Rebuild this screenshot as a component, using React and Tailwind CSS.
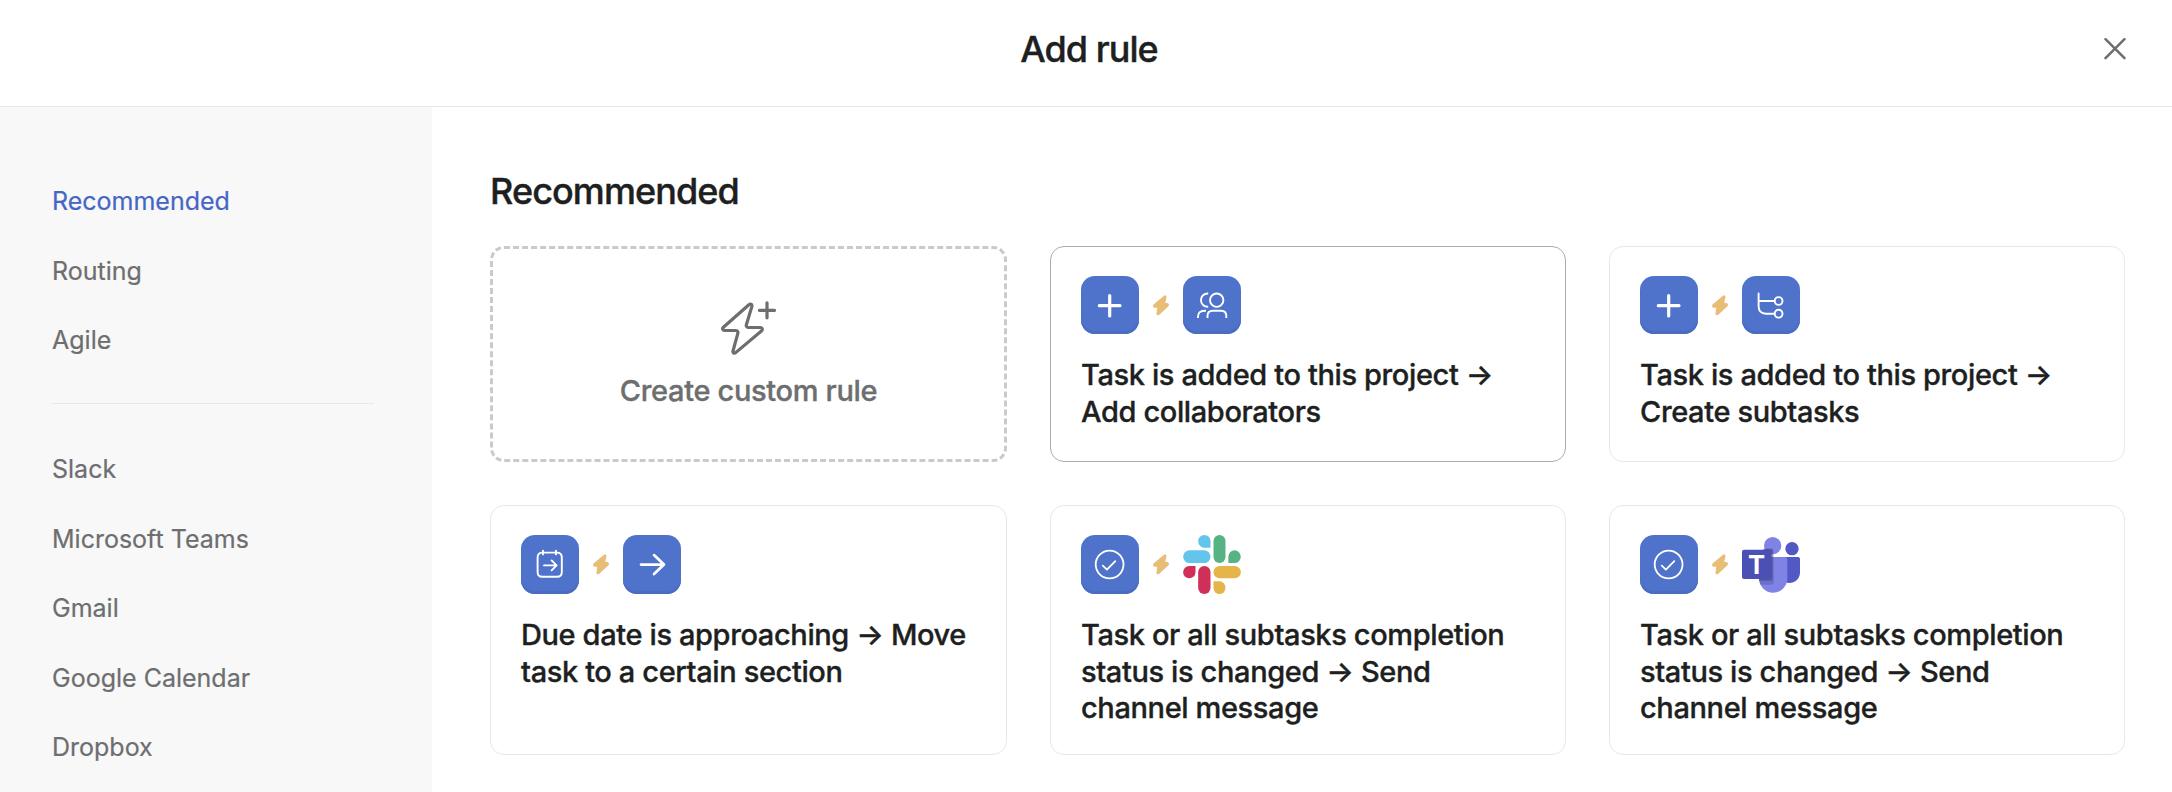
const stroke = { fill: "none", stroke: "currentColor", strokeLinecap: "round", strokeLinejoin: "round" };

function PlusGlyph() {
  return <path {...stroke} strokeWidth="3.2" d="M28.7 19.5V40M18.3 29.7H39" />;
}

function PeopleGlyph() {
  return (
    <g {...stroke} strokeWidth="1.9" strokeLinecap="butt">
      <circle cx="33.7" cy="24.2" r="6.7" />
      <path d="M25.2 17.5C21 17.3 18 20.3 18 24.2S21 31 25.2 30.8" />
      <path d="M24.5 42V40C24.5 36.8 26.7 34.8 29.8 34.8H38C41.1 34.8 43.3 36.8 43.3 40V42" />
      <path d="M15 42V40.4C15 36.6 17.6 34.6 23 34.8" />
    </g>
  );
}

function SubtaskGlyph() {
  return (
    <g {...stroke} strokeWidth="1.9">
      <path d="M16.6 17.4V30C16.6 35 19.2 37.7 24 37.7H32.4M16.6 25H32.4" />
      <circle cx="36.6" cy="25" r="3.9" />
      <circle cx="36.6" cy="37.7" r="3.9" />
    </g>
  );
}

function CalendarGlyph() {
  return (
    <g {...stroke} strokeWidth="1.9">
      <path d="M21.4 17.6H36C39 17.6 40.8 19.4 40.8 22.4V37C40.8 40 39 41.8 36 41.8H21.4C18.4 41.8 16.6 40 16.6 37V22.4C16.6 19.4 18.4 17.6 21.4 17.6Z" />
      <path d="M22 15.6V19.4M35 15.6V19.4" />
      <path d="M23 30.4H35.4M30.6 25.4L35.6 30.4L30.6 35.4" />
    </g>
  );
}

function ArrowGlyph() {
  return <path {...stroke} strokeWidth="2.7" d="M18 29.6H41M31 20.1L41 29.6L31 39.1" />;
}

function CheckGlyph() {
  return (
    <g {...stroke} strokeWidth="1.8">
      <circle cx="28.6" cy="29.5" r="13.9" />
      <path d="M21.8 30.7L25.9 34.6L34.3 26.1" />
    </g>
  );
}

function Tile({ children }) {
  return (
    <div className="h-full w-[58px] rounded-[14px] bg-[#4f73cb] text-white shadow-[inset_0_-3px_1px_#4a6cc1]">
      <svg viewBox="0 0 58 58" className="block size-[58px]">{children}</svg>
    </div>
  );
}

function SlackLogo() {
  return (
    <svg viewBox="0 0 173 177" className="block h-[59px] w-[58px]">
      <g fill="#63c4ec">
        <rect x="0" y="46" width="82" height="38" rx="19" />
        <path d="M63.5 0A18.5 18.5 0 0 1 82 19V38H63.5A18.5 19 0 0 1 63.5 0Z" />
      </g>
      <g fill="#58b384">
        <rect x="91" y="0" width="36" height="84" rx="18" />
        <path d="M135.5 84V65A18.7 19 0 1 1 154.3 84Z" />
      </g>
      <g fill="#cf3059">
        <rect x="45" y="93" width="37" height="84" rx="18.5" />
        <path d="M37 93V111.5A18.5 18.5 0 1 1 18.5 93Z" />
      </g>
      <g fill="#e5b54a">
        <rect x="91" y="93" width="82" height="37" rx="18.5" />
        <path d="M91 139H109A18 19 0 1 1 91 158Z" />
      </g>
    </svg>
  );
}

function TeamsLogo() {
  return (
    <svg viewBox="0 0 174 177" className="block h-[59px] w-[58px]">
      <circle cx="150" cy="41" r="20" fill="#5258c4" />
      <path d="M128 66H168Q174 66 174 72V113A31 31 0 0 1 128 140Z" fill="#5258c4" />
      <circle cx="92" cy="32" r="26" fill="#7f83e6" />
      <path d="M51 66H128Q136 66 136 74V130A42.5 43 0 0 1 51 130Z" fill="#7f83e6" />
      <path d="M66 41H88Q95 41 95 48V141Q95 149 87 149H56Q51 141 51 130V60Z" fill="#3f4279" opacity="0.3" />
      <path d="M66 41H86Q92 41 92 47V131Q92 137 86 137H51V60Z" fill="#3f4279" opacity="0.5" />
      <rect x="0" y="44" width="88" height="88" rx="6" fill="#4b50b5" />
      <text x="43.5" y="117" textAnchor="middle" fontFamily="Inter, sans-serif" fontWeight="700" fontSize="77" fill="#fff">T</text>
    </svg>
  );
}

function Bolt() {
  return (
    <svg viewBox="0 0 16 21" className="block h-[21px] w-4 text-[#e8bd76]">
      <path d="M11.6 1.4L1.2 10.3Q.9 11.5 1.8 11.8H5.4L4.4 18.8Q4.8 19.7 5.6 19L14.8 10.4Q15.2 9.4 14.3 9.0H11L12.5 2.2Q12.5 1.2 11.6 1.4Z" fill="currentColor" stroke="currentColor" strokeWidth="2" strokeLinejoin="round" />
    </svg>
  );
}

const rules = [
  { text: "Task is added to this project → Add collaborators", from: <Tile><PlusGlyph /></Tile>, to: <Tile><PeopleGlyph /></Tile>, active: true },
  { text: "Task is added to this project → Create subtasks", from: <Tile><PlusGlyph /></Tile>, to: <Tile><SubtaskGlyph /></Tile> },
  { text: "Due date is approaching → Move task to a certain section", from: <Tile><CalendarGlyph /></Tile>, to: <Tile><ArrowGlyph /></Tile>, tall: true },
  { text: "Task or all subtasks completion status is changed → Send channel message", from: <Tile><CheckGlyph /></Tile>, to: <SlackLogo />, tall: true },
  { text: "Task or all subtasks completion status is changed → Send channel message", from: <Tile><CheckGlyph /></Tile>, to: <TeamsLogo />, tall: true },
];

function RuleCard({ rule }) {
  return (
    <button className={`flex flex-col items-start rounded-[14px] border bg-white pt-[29px] pr-[29px] pl-[30px] text-left ${rule.active ? "border-[#acabab]" : "border-[#e9e8e8]"}`}>
      <span className={`flex items-center gap-3.5 ${rule.tall ? "h-[59px]" : "h-[58px]"}`}>
        {rule.from}
        <Bolt />
        {rule.to}
      </span>
      <span className="mt-[23px] text-[29px] leading-[36.6px] font-medium tracking-[-0.38px] text-[#1e1f21] [-webkit-text-stroke:0.35px_currentColor]">{rule.text}</span>
    </button>
  );
}

function NavItem({ children, active }) {
  return (
    <a className={`text-[25px] leading-[30px] ${active ? "text-[#4566c6]" : "text-[#6d6e6f]"} [-webkit-text-stroke:0.2px_currentColor]`}>{children}</a>
  );
}

export default function App() {
  return (
    <div className="flex h-[792px] w-[2172px] flex-col overflow-hidden bg-white font-['Inter',sans-serif]">
      <header className="flex h-[107px] shrink-0 items-center border-b border-[#e8e8e8] pr-[46px] pb-2 pl-[74px]">
        <h1 className="flex-1 text-center text-[36px] leading-[44px] font-medium tracking-[-0.95px] text-[#1e1f21] [-webkit-text-stroke:0.4px_currentColor]">Add rule</h1>
        <button aria-label="Close" className="text-[#6d6e6f]">
          <svg viewBox="0 0 22 22" className="block size-[22px]">
            <path {...stroke} strokeWidth="2.5" d="M1.5 1.2L20.5 20.2M20.5 1.2L1.5 20.2" />
          </svg>
        </button>
      </header>
      <div className="flex min-h-0 flex-1">
        <aside className="flex w-[432px] shrink-0 flex-col bg-[#f8f8f8] pt-[79px] pr-[58px] pl-[52px]">
          <nav className="flex flex-col gap-[39.5px]">
            <NavItem active>Recommended</NavItem>
            <NavItem>Routing</NavItem>
            <NavItem>Agile</NavItem>
          </nav>
          <hr className="mt-[48px] mb-[50px] border-[#e8e8e8]" />
          <nav className="flex flex-col gap-[39.5px]">
            <NavItem>Slack</NavItem>
            <NavItem>Microsoft Teams</NavItem>
            <NavItem>Gmail</NavItem>
            <NavItem>Google Calendar</NavItem>
            <NavItem>Dropbox</NavItem>
          </nav>
        </aside>
        <main className="flex flex-1 flex-col pt-[62px] pl-[58px]">
          <h2 className="text-[36px] leading-[44px] font-medium tracking-[-0.92px] text-[#1e1f21] [-webkit-text-stroke:0.4px_currentColor]">Recommended</h2>
          <div className="mt-[33px] grid grid-cols-[517px_516px_516px] grid-rows-[216px_250px] gap-[43px]">
            <button className="flex flex-col items-center rounded-[14px] border-3 border-dashed border-[#cbcaca] pt-[52px] text-[#6d6e6f]">
              <svg viewBox="0 0 57 56" className="block h-14 w-[57px]">
                <path {...stroke} strokeWidth="3.2" d="M28.6 4L3.4 26.2C2 27.5 2.6 29.5 4.6 29.5H15.6C17.2 29.5 18.2 30.7 17.9 32.2L13 50C12.6 52 14.3 52.8 15.7 51.6L41.4 30C42.9 28.6 42.3 26.5 40.2 26.5H28.6C27 26.5 26 25.4 26.3 24L31.9 5.4C32.3 3.2 30.4 2.5 28.6 4Z" />
                <path {...stroke} strokeWidth="3.2" d="M47 1.8V16.8M39.400 9.300H54.600" />
              </svg>
              <span className="mt-[16px] text-[29px] leading-[36.6px] font-medium tracking-[-0.33px] [-webkit-text-stroke:0.35px_currentColor]">Create custom rule</span>
            </button>
            {rules.map((rule, i) => (
              <RuleCard key={i} rule={rule} />
            ))}
          </div>
        </main>
      </div>
    </div>
  );
}
